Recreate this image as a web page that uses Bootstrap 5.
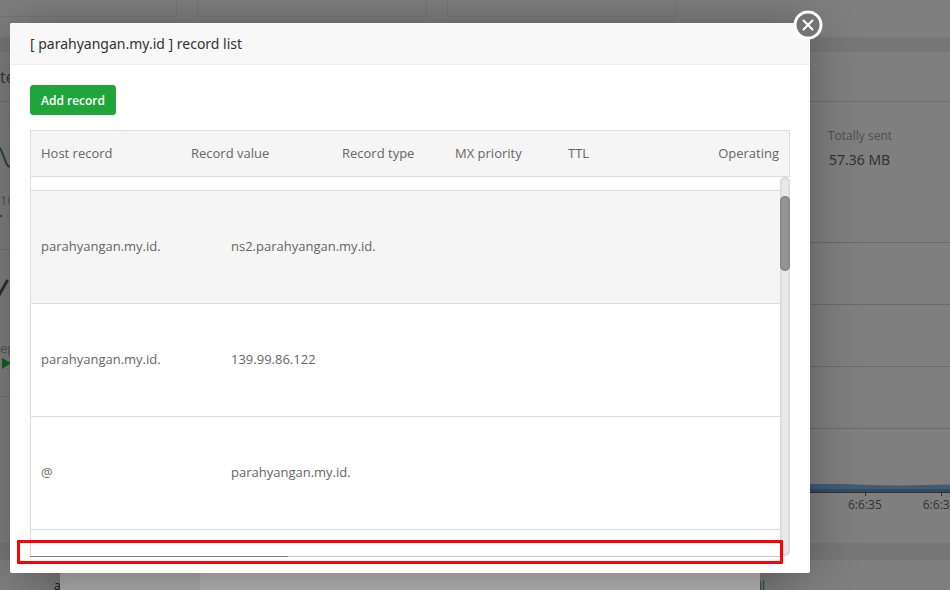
<!DOCTYPE html>
<html lang="en">
<head>
<meta charset="utf-8">
<meta name="viewport" content="width=device-width, initial-scale=1">
<title>Record list</title>
<link href="https://cdn.jsdelivr.net/npm/bootstrap@5.3.0/dist/css/bootstrap.min.css" rel="stylesheet">
<style>
body { font-family: "Open Sans", "Noto Sans", sans-serif; font-size: 13px; line-height: 20px; color: #666; background: #7f7f7f; }
/* dimmed dashboard */
.dash { height: 100vh; color: #333; }
.tiles { height: 37px; gap: 20px; }
.tile { width: 230px; height: 17px; border: 1px solid #777; border-top: 0; }
.tile-first { width: 177px; border-left: 0; }
.band { background: #777; }
.band-top { height: 15px; }
.band-bottom { height: 17px; }
.panels { height: 491px; }
.dash-side { height: 491px; }
.dash-title { height: 50px; border-bottom: 1px solid #6e6e6e; font-size: 16px; padding-top: 15px; }
.side-cell { border-bottom: 1px solid #727272; }
.side-cell-a { height: 148px; padding-top: 44px; }
.side-cell-b { height: 147px; padding-top: 24px; }
.side-text { color: #555; height: 20px; }
.dash-traffic { width: 150px; }
.stat { height: 140px; padding: 24px 0 0 28px; color: #4f4f4f; font-size: 12px; }
.stat-value { font-family: "Noto Sans", sans-serif; font-size: 14px; line-height: 28px; padding-left: 1px; color: #333; }
.plot-line { height: 62px; border-top: 1px solid #6b6b6b; }
.plot-line-last { height: 56px; border-top: 1px solid #6b6b6b; }
.axis-labels { gap: 41px; padding-left: 48px; font-size: 12px; line-height: 18px; }
/* dialogs */
.back-dialog { left: 60px; right: 190px; bottom: 0; height: 40px; background: #b0b0b0; box-shadow: 1px 1px 50px rgba(0,0,0,.3); }
.back-menu { width: 140px; background: #a6a6a6; }
.peek { bottom: -6px; font-size: 12px; color: #111; }
.peek-left { left: 54px; }
.peek-right { right: 185px; color: #15514f; }
.dialog { top: 23px; left: 10px; right: 140px; background: #fff; border-radius: 2px; box-shadow: 1px 1px 50px rgba(0,0,0,.3); }
.dialog-title { height: 42px; line-height: 42px; font-family: "Noto Sans", sans-serif; font-size: 14px; color: #333; background: #f8f8f8; border-bottom: 1px solid #eee; border-radius: 2px 2px 0 0; }
.dialog-main { padding: 20px 20px 16px; }
.close-x { top: -13px; right: -13px; width: 30px; height: 30px; }
.btn-add { --bs-btn-color: #fff; --bs-btn-bg: #20a53a; --bs-btn-border-color: #20a53a; --bs-btn-hover-color: #fff; --bs-btn-hover-bg: #10952a; --bs-btn-font-size: 12px; --bs-btn-font-weight: 600; --bs-btn-border-radius: 3px; --bs-btn-padding-x: 10px; --bs-btn-padding-y: 5px; line-height: 20px; height: 30px; margin-bottom: 15px; }
.records { table-layout: fixed; width: 100%; }
.records th, .records td { padding: 0 10px 2px; font-weight: 400; white-space: nowrap; }
.records-head { border: 1px solid #ddd; background: #f5f5f5; height: 47px; border-collapse: separate; border-spacing: 0; }
.c-host { width: 150px; } .c-value { width: 151px; } .c-type { width: 113px; }
.viewport { height: 379px; border-left: 1px solid #ddd; }
.records-body { width: 1100px; }
.records-body td { height: 113px; border-bottom: 1px solid #ddd; }
.records-body .cut td { height: 13px; }
.records-body .cut-end td { height: 90px; }
.c-wide { width: 190px; }
.shade { background: #f5f5f5; }
.track { width: 10px; padding-top: 19px; background: #e8e8e8; border-radius: 6px; box-shadow: inset 0 0 3px rgba(0,0,0,.2); }
.thumb { height: 75px; background: #959595; border-radius: 6px; box-shadow: inset 0 0 3px rgba(0,0,0,.3); }
.hbar { height: 1px; background: #c6c6c6; margin-right: 10px; }
.hthumb { width: 258px; height: 1px; background: #808080; }
.callout { left: 7px; right: 27px; bottom: 9px; height: 24px; border: 3px solid #f00; border-radius: 1px; pointer-events: none; }
</style>
<script src="https://cdn.jsdelivr.net/npm/bootstrap@5.3.0/dist/js/bootstrap.bundle.min.js"></script>
</head>
<body class="overflow-hidden">
<main class="dash position-relative overflow-hidden">
  <div class="tiles d-flex"><div class="tile tile-first"></div><div class="tile"></div><div class="tile"></div></div>
  <div class="band band-top"></div>
  <div class="panels d-flex">
    <section class="dash-side flex-grow-1">
      <div class="dash-title">te</div>
      <div class="side-cell side-cell-a">
        <svg class="d-block" width="20" height="44" aria-hidden="true"><path d="M-2 0C2 2 5 17 8 20L15 22" fill="none" stroke="#2c434d" stroke-width="2"/></svg>
        <div class="side-text">10</div>
        <svg class="d-block" width="10" height="10" aria-hidden="true"><path d="M-4 3L3 6L-4 9z" fill="#0b5b35"/></svg>
      </div>
      <div class="side-cell side-cell-b">
        <svg class="d-block" width="14" height="64" aria-hidden="true"><path d="M-2 23L7 7" fill="none" stroke="#303030" stroke-width="3" stroke-linecap="round"/></svg>
        <div class="side-text">ep</div>
        <svg class="d-block" width="14" height="12" aria-hidden="true"><path d="M2 0L11 5L2 11z" fill="#0c6420"/></svg>
      </div>
    </section>
    <section class="dash-traffic flex-shrink-0">
      <div class="dash-title"></div>
      <div class="stat"><div>Totally sent</div><div class="stat-value">57.36 MB</div></div>
      <div class="plot-line"></div><div class="plot-line"></div><div class="plot-line"></div><div class="plot-line-last"></div>
      <svg class="d-block" width="150" height="12" aria-hidden="true"><path d="M0 0C50 0 65 2 100 2C120 2 130 1 150 1V8H0z" fill="#3b5c7e"/><path d="M0 5H150V8H0z" fill="#384b5d"/><path d="M0 0C50 0 65 2 100 2C120 2 130 1 150 1" fill="none" stroke="#4f5860"/><path d="M0 8.500H150M65.500 8V12M141.500 8V12" stroke="#303030" fill="none"/></svg>
      <div class="axis-labels d-flex overflow-hidden"><span>6:6:35</span><span>6:6:38</span></div>
    </section>
  </div>
  <div class="band band-bottom"></div>
  <div class="peek peek-left position-absolute">a</div>
  <div class="peek peek-right position-absolute">il</div>
  <div class="back-dialog position-absolute d-flex"><div class="back-menu"></div></div>
</main>
<section class="dialog position-absolute" role="dialog" aria-labelledby="dialogTitle">
  <h1 class="dialog-title m-0 fw-normal" id="dialogTitle"><span class="d-block ps-3 ms-1">[ parahyangan.my.id ] record list</span></h1>
  <button type="button" class="close-x btn p-0 border-0 position-absolute d-block" aria-label="Close"><svg class="d-block" width="30" height="30" viewBox="0 0 30 30"><circle cx="15" cy="15" r="13" fill="#737373" stroke="#fff" stroke-width="3"/><path d="M10.500 10.500L19.500 19.500M19.500 10.500L10.500 19.500" stroke="#fff" stroke-width="2" stroke-linecap="round"/></svg></button>
  <div class="dialog-main">
    <button type="button" class="btn btn-add d-block">Add record</button>
    <table class="records records-head">
      <colgroup><col class="c-host"><col class="c-value"><col class="c-type"><col class="c-type"><col class="c-type"><col></colgroup>
      <thead><tr><th>Host record</th><th>Record value</th><th>Record type</th><th>MX priority</th><th>TTL</th><th class="text-end">Operating</th></tr></thead>
    </table>
    <div class="d-flex">
      <div class="viewport flex-fill overflow-hidden">
        <table class="records records-body">
          <colgroup><col class="c-wide"><col></colgroup>
          <tbody>
            <tr class="cut"><td></td><td></td></tr>
            <tr class="shade"><td>parahyangan.my.id.</td><td>ns2.parahyangan.my.id.</td></tr>
            <tr><td>parahyangan.my.id.</td><td>139.99.86.122</td></tr>
            <tr><td>@</td><td>parahyangan.my.id.</td></tr>
            <tr class="cut-end"><td></td><td></td></tr>
          </tbody>
        </table>
      </div>
      <div class="track flex-shrink-0"><div class="thumb"></div></div>
    </div>
    <div class="hbar"><div class="hthumb"></div></div>
  </div>
  <div class="callout position-absolute"></div>
</section>
</body>
</html>
